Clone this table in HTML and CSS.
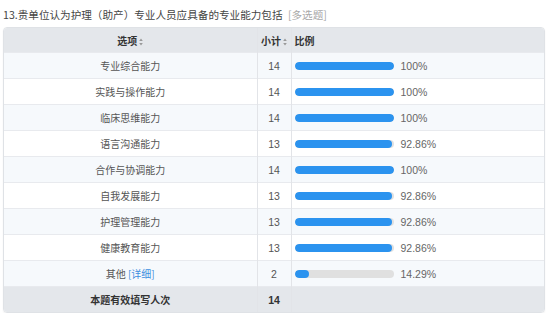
FILE: index.html
```html
<!DOCTYPE html>
<html lang="zh">
<head>
<meta charset="utf-8">
<link rel="stylesheet" href="styles.css">
</head>
<body>
<div class="page">
  <div class="title">13.贵单位认为护理（助产）专业人员应具备的专业能力包括 <span class="tag">[多选题]</span></div>
  <div class="card">
    <table class="grid">
      <colgroup><col class="c1"><col class="c2"><col class="c3"></colgroup>
      <thead>
        <tr class="head">
          <th class="center">选项<svg class="sort" viewBox="0 0 4 8" width="4" height="8"><path d="M2 0.5 L3.8 3 H0.2Z M2 7.5 L3.8 5 H0.2Z" fill="#999"/></svg></th>
          <th class="center">小计<svg class="sort" viewBox="0 0 4 8" width="4" height="8"><path d="M2 0.5 L3.8 3 H0.2Z M2 7.5 L3.8 5 H0.2Z" fill="#999"/></svg></th>
          <th class="left">比例</th>
        </tr>
      </thead>
      <tbody>
        <tr class="alt"><td class="center">专业综合能力</td><td class="center num">14</td><td><div class="ratio"><div class="track"><div class="fill" style="width:100%"></div></div><span>100%</span></div></td></tr>
        <tr><td class="center">实践与操作能力</td><td class="center num">14</td><td><div class="ratio"><div class="track"><div class="fill" style="width:100%"></div></div><span>100%</span></div></td></tr>
        <tr class="alt"><td class="center">临床思维能力</td><td class="center num">14</td><td><div class="ratio"><div class="track"><div class="fill" style="width:100%"></div></div><span>100%</span></div></td></tr>
        <tr><td class="center">语言沟通能力</td><td class="center num">13</td><td><div class="ratio"><div class="track"><div class="fill" style="width:98%"></div></div><span>92.86%</span></div></td></tr>
        <tr class="alt"><td class="center">合作与协调能力</td><td class="center num">14</td><td><div class="ratio"><div class="track"><div class="fill" style="width:100%"></div></div><span>100%</span></div></td></tr>
        <tr><td class="center">自我发展能力</td><td class="center num">13</td><td><div class="ratio"><div class="track"><div class="fill" style="width:98%"></div></div><span>92.86%</span></div></td></tr>
        <tr class="alt"><td class="center">护理管理能力</td><td class="center num">13</td><td><div class="ratio"><div class="track"><div class="fill" style="width:98%"></div></div><span>92.86%</span></div></td></tr>
        <tr><td class="center">健康教育能力</td><td class="center num">13</td><td><div class="ratio"><div class="track"><div class="fill" style="width:98%"></div></div><span>92.86%</span></div></td></tr>
        <tr class="alt"><td class="center">其他 <a class="more">[详细]</a></td><td class="center num">2</td><td><div class="ratio"><div class="track"><div class="fill" style="width:14.29%"></div></div><span>14.29%</span></div></td></tr>
        <tr class="total"><td class="center">本题有效填写人次</td><td class="center num">14</td><td></td></tr>
      </tbody>
    </table>
  </div>
</div>
</body>
</html>
```

FILE: styles.css
```css
html, body {
  margin: 0;
  padding: 0;
  background: #fff;
}
body {
  font-family: "Microsoft YaHei", "Noto Sans CJK SC", "Liberation Sans", sans-serif;
  color: #555;
}
.page {
  padding: 7px 9px 0 3px;
}
.title {
  font-size: 10.6px;
  line-height: 16px;
  color: #444;
  height: 20px;
  white-space: nowrap;
}
.tag {
  color: #a8a8a8;
  margin-left: 3px;
}
.card {
  border: 1px solid #dfe2e6;
  border-radius: 4px;
  overflow: hidden;
  box-shadow: 0 1px 2px rgba(0,0,0,0.06);
}
.grid {
  width: 100%;
  border-collapse: collapse;
  table-layout: fixed;
  font-size: 10px;
}
.c1 { width: 253px; }
.c2 { width: 34px; }
.grid th, .grid td {
  padding: 0;
  border-left: 1px solid #e2e4e8;
  border-top: 1px solid #e8eaee;
  white-space: nowrap;
}
.grid th:first-child, .grid td:first-child {
  border-left: none;
}
.head th {
  border-top: none;
  height: 24px;
  background: #e4e7eb;
  color: #333;
  font-weight: bold;
  font-size: 10px;
}
.grid tbody tr {
  height: 25px;
}
.grid tbody td {
  height: 25px;
}
.num {
  font-family: "Liberation Sans", Arial, sans-serif;
  font-size: 10.5px;
}
.center { text-align: center; }
.left { text-align: left; padding-left: 3px !important; }
.sort {
  margin-left: 2px;
  vertical-align: -1px;
}
.alt td { background: #f6f9fc; }
.total td {
  background: #e4e7eb;
  color: #333;
  font-weight: bold;
}
.more {
  color: #3d8fe0;
}
.ratio {
  display: flex;
  align-items: center;
  gap: 7px;
  padding-left: 3px;
  font-family: "Liberation Sans", Arial, sans-serif;
  font-size: 10.5px;
  color: #666;
}
.track {
  width: 99px;
  height: 8px;
  border-radius: 4px;
  background: #e0e0e0;
  overflow: hidden;
}
.fill {
  height: 100%;
  border-radius: 4px;
  background: #2b93ef;
}
```
